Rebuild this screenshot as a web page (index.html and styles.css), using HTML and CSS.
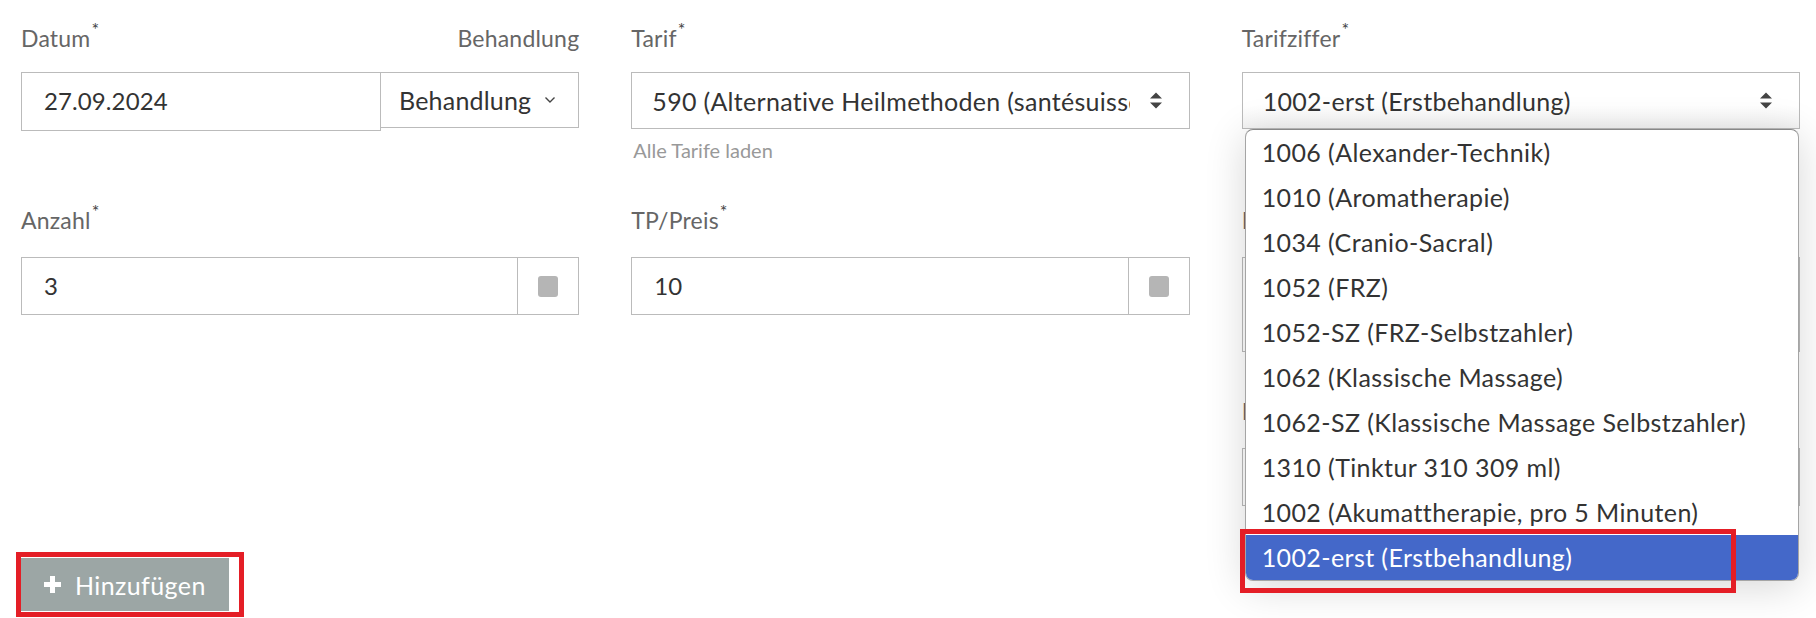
FILE: index.html
```html
<!DOCTYPE html>
<html lang="de">
<head>
  <meta charset="UTF-8" />
  <title>Leistung erfassen</title>
  <link rel="stylesheet" href="styles.css">
</head>
<body>
  <div class="form">
    <div class="row">
      <div class="field">
        <div class="label-row">
          <label>Datum<sup>*</sup></label>
          <span class="label-side">Behandlung</span>
        </div>
        <div class="group">
          <div class="input date">27.09.2024</div>
          <div class="drop-btn">Behandlung
            <svg width="12" height="8" viewBox="0 0 12 8"><path d="M1.5 1.5 L6 6 L10.5 1.5" fill="none" stroke="#444" stroke-width="1.4"/></svg>
          </div>
        </div>
      </div>

      <div class="field">
        <label>Tarif<sup>*</sup></label>
        <div class="select">
          <span class="select-text">590 (Alternative Heilmethoden (santésuisse))</span>
          <svg class="arrows" width="12" height="17" viewBox="0 0 12 17"><path d="M0 6.5 L6 0.5 L12 6.5 Z M0 10.5 L6 16.5 L12 10.5 Z" fill="#444"/></svg>
        </div>
        <div class="help">Alle Tarife laden</div>
      </div>

      <div class="field">
        <label>Tarifziffer<sup>*</sup></label>
        <div class="select open">
          <span class="select-text">1002-erst (Erstbehandlung)</span>
          <svg class="arrows" width="12" height="17" viewBox="0 0 12 17"><path d="M0 6.5 L6 0.5 L12 6.5 Z M0 10.5 L6 16.5 L12 10.5 Z" fill="#444"/></svg>
          <ul class="options">
            <li>1006 (Alexander-Technik)</li>
            <li>1010 (Aromatherapie)</li>
            <li>1034 (Cranio-Sacral)</li>
            <li>1052 (FRZ)</li>
            <li>1052-SZ (FRZ-Selbstzahler)</li>
            <li>1062 (Klassische Massage)</li>
            <li>1062-SZ (Klassische Massage Selbstzahler)</li>
            <li>1310 (Tinktur 310 309 ml)</li>
            <li>1002 (Akumattherapie, pro 5 Minuten)</li>
            <li class="active">1002-erst (Erstbehandlung)</li>
          </ul>
          <div class="mark mark-option"></div>
        </div>
      </div>
    </div>

    <div class="row row-2">
      <div class="field">
        <label>Anzahl<sup>*</sup></label>
        <div class="group">
          <div class="input">3</div>
          <div class="addon"><span class="box"></span></div>
        </div>
      </div>

      <div class="field">
        <label>TP/Preis<sup>*</sup></label>
        <div class="group">
          <div class="input">10</div>
          <div class="addon"><span class="box"></span></div>
        </div>
      </div>

      <div class="field">
        <label>Bemerkung</label>
        <div class="input textarea"></div>
        <label class="second">MWST</label>
        <div class="input"></div>
      </div>
    </div>

    <div class="actions">
      <button class="add" type="button">
        <svg width="17" height="17" viewBox="0 0 17 17"><path d="M6 0 H11 V6 H17 V11 H11 V17 H6 V11 H0 V6 H6 Z" fill="#fff"/></svg>
        Hinzufügen
      </button>
      <div class="mark mark-add"></div>
    </div>
  </div>
</body>
</html>
```

FILE: styles.css
```css
html, body {
  min-height: 100vh;
}
body {
  margin: 0;
  font-family: Lato, "Open Sans", sans-serif;
  background-color: #fff;
  color: #333;
}
.form {
  padding: 23px 16px 0 21px;
}
.row {
  display: grid;
  grid-template-columns: repeat(3, minmax(0, 1fr));
  column-gap: 52px;
  align-items: start;
}
.row + .row {
  margin-top: 42px;
}
.field {
  display: flex;
  flex-direction: column;
  min-width: 0;
}
.label-row {
  display: flex;
  justify-content: space-between;
}
label, .label-side {
  font-size: 23px;
  line-height: 30px;
  letter-spacing: 0.2px;
  color: #666;
}
sup {
  font-size: 18px;
  line-height: 1;
  vertical-align: top;
  position: relative;
  top: -3px;
  margin-left: 1px;
  color: #444;
}
.label-row, .field > label {
  margin-bottom: 19px;
}
.row-2 .field > label {
  margin-bottom: 22px;
}
.row-2 .field > label.second {
  margin-top: 44px;
}
.group {
  display: flex;
  align-items: flex-start;
}
.input {
  height: 56px;
  border: 1px solid #bbb;
  padding: 0 22px;
  font-size: 24px;
  letter-spacing: 0.1px;
  line-height: 56px;
  color: #333;
}
.group .input {
  flex: 1;
  min-width: 0;
}
.input.date {
  height: 57px;
}
.textarea {
  height: 93px;
}
.group .input + .addon {
  border-left: none;
}
.addon {
  width: 60px;
  height: 56px;
  border: 1px solid #bbb;
  display: flex;
  align-items: center;
  justify-content: center;
}
.box {
  width: 20px;
  height: 21px;
  background-color: #b5b5b5;
  border-radius: 3px;
}
.drop-btn {
  height: 54px;
  border: 1px solid #bbb;
  padding: 0 22px 0 18px;
  font-size: 25px;
  letter-spacing: 0.2px;
  line-height: 54px;
  color: #333;
  display: flex;
  align-items: center;
  gap: 13px;
}
.group .date + .drop-btn {
  margin-left: -1px;
}
.select {
  position: relative;
  height: 55px;
  border: 1px solid #bbb;
  display: flex;
  align-items: center;
  padding: 0 27px 0 20px;
  font-size: 25px;
  letter-spacing: 0.3px;
  color: #333;
}
.select-text {
  flex: 1;
  min-width: 0;
  white-space: nowrap;
  overflow: hidden;
  margin-right: 20px;
}
.arrows {
  flex: none;
}
.select.open {
  background: linear-gradient(#fff 60%, #f4f4f4);
}
.help {
  margin-top: 8px;
  padding-left: 2px;
  font-size: 20px;
  line-height: 26px;
  color: #999;
}
.options {
  position: absolute;
  top: 100%;
  left: 2px;
  right: 0;
  margin: 1px 0 0;
  padding: 0;
  list-style: none;
  background-color: #fff;
  border: 1px solid #a5a5a5;
  border-top-color: #888;
  border-radius: 8px;
  overflow: hidden;
  box-shadow: 0 6px 40px rgba(0, 0, 0, 0.16);
  z-index: 2;
}
.options li {
  height: 45px;
  line-height: 45px;
  padding-left: 16px;
  font-size: 25px;
  letter-spacing: 0.4px;
  color: #333;
  white-space: nowrap;
}
.options li.active {
  background-color: #4468c9;
  color: #fff;
}
.actions {
  position: relative;
  margin-top: 52px;
}
.add {
  display: flex;
  align-items: center;
  gap: 14px;
  height: 53px;
  padding: 0 23px;
  border: none;
  background-color: #9ca6a5;
  color: #fff;
  font-family: inherit;
  font-size: 25px;
  letter-spacing: 0.4px;
}
.mark {
  position: absolute;
  border: 5px solid #e41e26;
  z-index: 3;
}
.mark-add {
  left: -5px;
  top: -6px;
  width: 218px;
  height: 55px;
}
.mark-option {
  left: -3px;
  top: 456px;
  width: 486px;
  height: 54px;
}
```
